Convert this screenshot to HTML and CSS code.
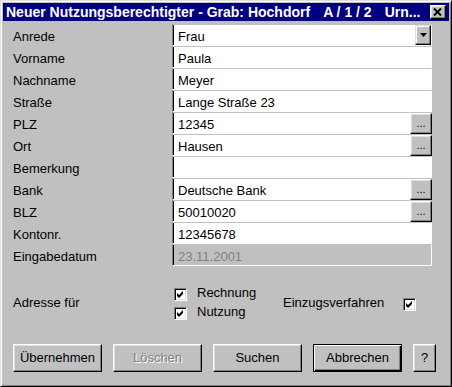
FILE: index.html
```html
<!DOCTYPE html>
<html lang="de">
<head>
<meta charset="utf-8">
<title>Neuer Nutzungsberechtigter</title>
<link rel="stylesheet" href="styles.css">
</head>
<body>
<div class="window">
  <div class="titlebar">
    <span class="title">Neuer Nutzungsberechtigter - Grab: Hochdorf<span class="gap">A / 1 / 2</span><span class="gap">Urn...</span></span>
    <span class="close"><svg width="14" height="12" viewBox="0 0 14 12"><path d="M3 2.5 L10 9.5 M10 2.5 L3 9.5" stroke="#000" stroke-width="1.8" fill="none"/></svg></span>
  </div>
  <div class="body">
    <div class="form">
      <div class="lbl">Anrede</div>
      <div class="field select"><span class="val">Frau</span><span class="dd"><svg width="7" height="4" viewBox="0 0 7 4"><polygon points="0,0 7,0 3.5,4" fill="#000"/></svg></span></div>

      <div class="lbl">Vorname</div>
      <div class="field">Paula</div>

      <div class="lbl">Nachname</div>
      <div class="field">Meyer</div>

      <div class="lbl">Straße</div>
      <div class="field">Lange Straße 23</div>

      <div class="lbl">PLZ</div>
      <div class="fieldrow"><div class="field">12345</div><span class="ell">...</span></div>

      <div class="lbl">Ort</div>
      <div class="fieldrow"><div class="field">Hausen</div><span class="ell">...</span></div>

      <div class="lbl">Bemerkung</div>
      <div class="field"></div>

      <div class="lbl">Bank</div>
      <div class="fieldrow"><div class="field">Deutsche Bank</div><span class="ell">...</span></div>

      <div class="lbl">BLZ</div>
      <div class="fieldrow"><div class="field">50010020</div><span class="ell">...</span></div>

      <div class="lbl">Kontonr.</div>
      <div class="field">12345678</div>

      <div class="lbl">Eingabedatum</div>
      <div class="field disabled">23.11.2001</div>
    </div>

    <div class="options">
      <div class="lbl2">Adresse für</div>
      <div class="checks">
        <div class="chk"><span class="box"><svg width="11" height="11" viewBox="0 0 11 11"><path d="M2 4 L4 6 L8 2 L8 5 L4 9 L2 7 Z" fill="#000"/></svg></span><span class="ctext">Rechnung</span></div>
        <div class="chk"><span class="box"><svg width="11" height="11" viewBox="0 0 11 11"><path d="M2 4 L4 6 L8 2 L8 5 L4 9 L2 7 Z" fill="#000"/></svg></span><span class="ctext">Nutzung</span></div>
      </div>
      <div class="einzug"><span class="etext">Einzugsverfahren</span><span class="box"><svg width="11" height="11" viewBox="0 0 11 11"><path d="M2 4 L4 6 L8 2 L8 5 L4 9 L2 7 Z" fill="#000"/></svg></span></div>
    </div>

    <div class="buttons">
      <span class="btn">Übernehmen</span>
      <span class="btn disabled">Löschen</span>
      <span class="btn">Suchen</span>
      <span class="btn default">Abbrechen</span>
      <span class="btn help">?</span>
    </div>
  </div>
</div>
</body>
</html>
```

FILE: styles.css
```css
html, body {
  margin: 0;
  padding: 0;
  background: #c0c0c0;
}
body {
  font-family: "Liberation Sans", Arial, sans-serif;
  font-size: 13px;
  color: #000;
}
.window {
  width: 452px;
  height: 387px;
  box-sizing: border-box;
  border: 1px solid;
  border-color: #dfdfdf #000 #000 #dfdfdf;
  box-shadow: inset 1px 1px #fff, inset -1px -1px #808080;
  padding: 2px;
  background: #c0c0c0;
}
.titlebar {
  display: flex;
  align-items: flex-start;
  height: 18px;
  background: #000080;
  color: #fff;
  font-weight: bold;
  font-size: 14px;
  line-height: 18px;
  padding: 0 3px 0 3px;
}
.title {
  flex: 1;
  white-space: nowrap;
  overflow: hidden;
}
.gap {
  margin-left: 13px;
}
.close {
  box-sizing: border-box;
  width: 16px;
  height: 14px;
  margin-top: 2px;
  background: #c0c0c0;
  border: 1px solid;
  border-color: #fff #000 #000 #fff;
  box-shadow: inset -1px -1px #808080, inset 1px 1px #dfdfdf;
  display: flex;
  align-items: center;
  justify-content: center;
}
.close svg { display: block; }
.body {
  padding: 3px 0 0 10px;
}
.form {
  display: grid;
  grid-template-columns: 159px 260px;
  grid-auto-rows: 22px;
}
.lbl {
  padding-top: 3px;
  line-height: 19px;
  white-space: nowrap;
}
.field {
  box-sizing: border-box;
  height: 22px;
  background: #fff;
  border-top: 1px solid #c0c0c0;
  border-left: 1px solid #808080;
  border-right: 1px solid #fff;
  border-bottom: 1px solid #fff;
  box-shadow: inset 1px 0 #000;
  padding: 2px 0 0 5px;
  line-height: 19px;
  white-space: nowrap;
  overflow: hidden;
}
.field.disabled {
  background: #c0c0c0;
  color: #808080;
}
.field.select {
  display: flex;
  padding: 0 0 0 5px;
}
.select .val {
  flex: 1;
  padding-top: 2px;
  line-height: 19px;
}
.dd {
  box-sizing: border-box;
  width: 16px;
  height: 20px;
  background: #c0c0c0;
  border: 1px solid;
  border-color: #dfdfdf #000 #000 #dfdfdf;
  box-shadow: inset -1px -1px #808080, inset 1px 1px #fff;
  display: flex;
  align-items: center;
  justify-content: center;
}
.dd svg { display: block; }
.fieldrow {
  display: flex;
}
.fieldrow .field {
  flex: 1;
}
.ell {
  box-sizing: border-box;
  width: 22px;
  height: 21px;
  margin-top: 1px;
  background: #c0c0c0;
  border: 1px solid;
  border-color: #fff #000 #000 #fff;
  box-shadow: inset -1px -1px #808080, inset 1px 1px #dfdfdf;
  font-size: 11px;
  line-height: 19px;
  text-align: center;
}
.options {
  display: flex;
  margin-top: 20px;
  height: 38px;
}
.lbl2 {
  width: 159px;
  margin-top: 10px;
  line-height: 14px;
}
.checks {
  width: 111px;
}
.chk {
  display: flex;
  align-items: flex-start;
  height: 19px;
}
.ctext, .etext {
  line-height: 14px;
  white-space: nowrap;
}
.box {
  box-sizing: border-box;
  width: 13px;
  height: 13px;
  background: #fff;
  border: 1px solid;
  border-color: #808080 #fff #fff #808080;
  box-shadow: inset 1px 1px #000, inset -1px -1px #dfdfdf;
  flex: none;
}
.box svg { display: block; }
.chk .box {
  margin: 2px 10px 0 2px;
}
.einzug {
  display: flex;
  align-items: flex-start;
  margin-top: 10px;
}
.etext {
  width: 120px;
}
.einzug .box {
  margin-top: 2px;
}
.buttons {
  display: flex;
  gap: 11px;
  margin-top: 20px;
}
.btn {
  box-sizing: border-box;
  width: 89px;
  height: 28px;
  background: #c0c0c0;
  border: 1px solid;
  border-color: #fff #000 #000 #fff;
  box-shadow: inset -1px -1px #808080, inset 1px 1px #dfdfdf;
  display: flex;
  align-items: center;
  justify-content: center;
  line-height: 14px;
  white-space: nowrap;
}
.btn.disabled {
  color: #808080;
  text-shadow: 1px 1px #fff;
}
.btn.default {
  border-color: #000;
  box-shadow: inset 1px 1px #fff, inset -1px -1px #000, inset -2px -2px #808080;
}
.btn.help {
  width: 23px;
}
```
